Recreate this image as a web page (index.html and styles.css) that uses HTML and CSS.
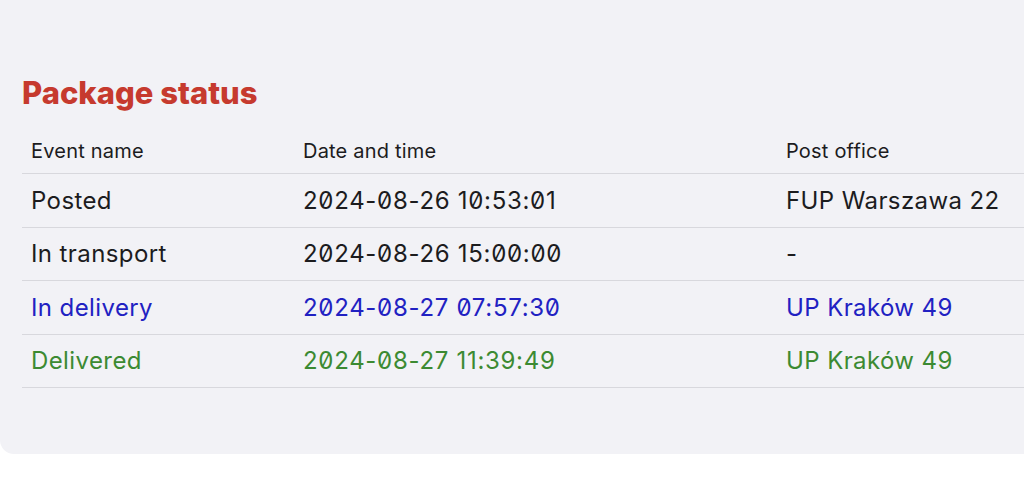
FILE: index.html
```html
<!DOCTYPE html>
<html lang="en">
<head>
<meta charset="utf-8">
<title>Package status</title>
<link rel="stylesheet" href="styles.css">
</head>
<body>
<section class="card">
  <h1 class="title">Package status</h1>
  <div class="table">
    <div class="row head">
      <div class="cell">Event name</div>
      <div class="cell">Date and time</div>
      <div class="cell">Post office</div>
    </div>
    <div class="row">
      <div class="cell">Posted</div>
      <div class="cell date">2024-08-26 10:53:01</div>
      <div class="cell">FUP Warszawa 22</div>
    </div>
    <div class="row">
      <div class="cell">In transport</div>
      <div class="cell date">2024-08-26 15:00:00</div>
      <div class="cell">-</div>
    </div>
    <div class="row blue">
      <div class="cell">In delivery</div>
      <div class="cell date">2024-08-27 07:57:30</div>
      <div class="cell">UP Kraków 49</div>
    </div>
    <div class="row green">
      <div class="cell">Delivered</div>
      <div class="cell date">2024-08-27 11:39:49</div>
      <div class="cell">UP Kraków 49</div>
    </div>
  </div>
</section>
</body>
</html>
```
FILE: styles.css
```css
html, body {
  margin: 0;
  padding: 0;
  background: #ffffff;
}
body {
  font-family: Inter, "Noto Sans", "Liberation Sans", sans-serif;
  color: #1c1c1e;
}
.card {
  box-sizing: border-box;
  height: 454px;
  background: #f2f2f6;
  border-bottom-left-radius: 14px;
  padding: 76px 0 0 22px;
}
.title {
  margin: 0;
  font-size: 31px;
  line-height: 34px;
  font-weight: 800;
  color: #c63a2e;
}
.table {
  margin-top: 18px;
}
.row {
  display: grid;
  grid-template-columns: 272px 483px 1fr;
  align-items: center;
  box-sizing: border-box;
  height: 53.5px;
  border-bottom: 1px solid #d8d8dd;
}
.row.head {
  height: 46px;
  font-size: 20px;
  letter-spacing: 0.2px;
}
.row:not(.head) {
  font-size: 24px;
  letter-spacing: 0.4px;
}
.cell {
  padding-left: 9px;
  white-space: nowrap;
}
.row .date {
  font-feature-settings: "zero" 1;
  letter-spacing: 0.7px;
}
.blue {
  color: #2121c2;
}
.green {
  color: #3c8a32;
}
```
